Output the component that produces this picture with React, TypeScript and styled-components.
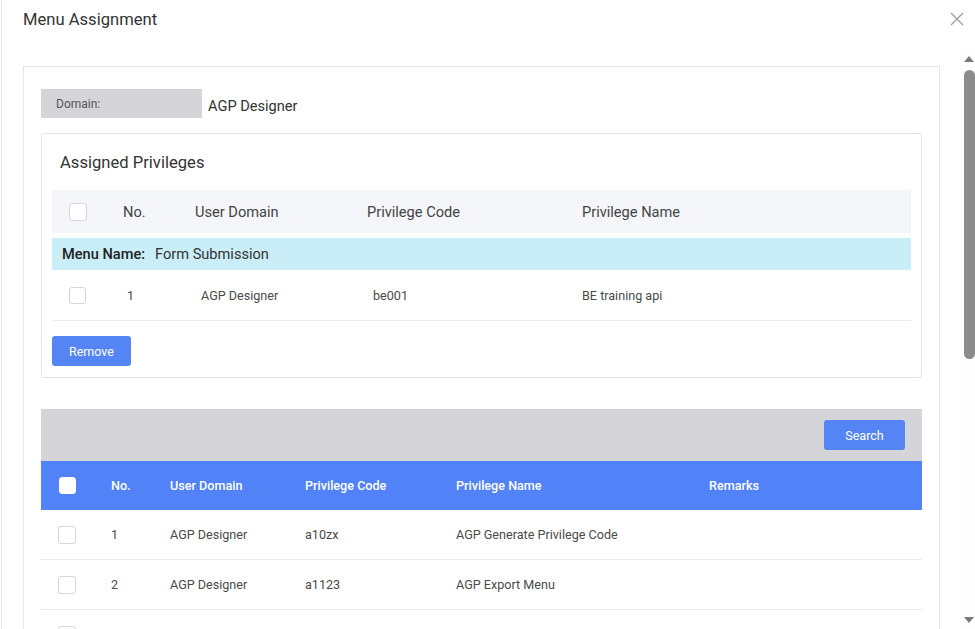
import React from "react";
import styled, { createGlobalStyle } from "styled-components";

const GlobalStyle = createGlobalStyle`
  html, body {
    margin: 0;
    padding: 0;
    background: #ffffff;
    font-family: Roboto, "Liberation Sans", Arial, sans-serif;
    color: #333;
  }
  * {
    box-sizing: border-box;
  }
`;

interface Privilege {
  no: number;
  domain: string;
  code: string;
  name: string;
  remarks?: string;
}

const available: Privilege[] = [
  { no: 1, domain: "AGP Designer", code: "a10zx", name: "AGP Generate Privilege Code" },
  { no: 2, domain: "AGP Designer", code: "a1123", name: "AGP Export Menu" },
  { no: 3, domain: "AGP Designer", code: "a1124", name: "AGP Assign Menu" },
  { no: 4, domain: "AGP Designer", code: "a1125", name: "AGP Import Menu" },
  { no: 5, domain: "AGP Designer", code: "a1126", name: "AGP Delete Menu" },
  { no: 6, domain: "AGP Designer", code: "a1127", name: "AGP Edit Menu" },
  { no: 7, domain: "AGP Designer", code: "a1128", name: "AGP View Menu" },
  { no: 8, domain: "AGP Designer", code: "a1129", name: "AGP Copy Menu" },
];

const ASSIGNED_HEAD = "71px 72px 172px 215px 1fr";
const ASSIGNED_ROW = "75px 74px 172px 209px 1fr";
const LIST_COLS = "70px 59px 135px 151px 253px 1fr";

export default function App() {
  return (
    <>
      <GlobalStyle />
      <Modal>
        <ModalHeader>
          <Title>Menu Assignment</Title>
          <CloseButton aria-label="close">
            <svg width="14" height="14" viewBox="0 0 14 14">
              <path d="M1 1 L13 13 M13 1 L1 13" stroke="#9a9a9a" strokeWidth="1.2" fill="none" />
            </svg>
          </CloseButton>
        </ModalHeader>
        <ModalBody>
          <ScrollContent>
            <OuterCard>
              <DomainRow>
                <DomainLabel>Domain:</DomainLabel>
                <DomainValue>AGP Designer</DomainValue>
              </DomainRow>

              <AssignedCard>
                <SectionTitle>Assigned Privileges</SectionTitle>
                <AssignedHead cols={ASSIGNED_HEAD}>
                  <CheckCell $offset={17}>
                    <Checkbox $size={18} />
                  </CheckCell>
                  <span>No.</span>
                  <span>User Domain</span>
                  <span>Privilege Code</span>
                  <span>Privilege Name</span>
                </AssignedHead>
                <MenuNameRow>
                  <MenuLabel>Menu Name:</MenuLabel>
                  <span>Form Submission</span>
                </MenuNameRow>
                <AssignedRow cols={ASSIGNED_ROW}>
                  <CheckCell $offset={17}>
                    <Checkbox $size={17} />
                  </CheckCell>
                  <span>1</span>
                  <span>AGP Designer</span>
                  <span>be001</span>
                  <span>BE training api</span>
                </AssignedRow>
                <PrimaryButton $width={79}>Remove</PrimaryButton>
              </AssignedCard>

              <Toolbar>
                <PrimaryButton $width={81}>Search</PrimaryButton>
              </Toolbar>
              <ListHead cols={LIST_COLS}>
                <CheckCell $offset={18}>
                  <Checkbox $size={17} $filled />
                </CheckCell>
                <span>No.</span>
                <span>User Domain</span>
                <span>Privilege Code</span>
                <span>Privilege Name</span>
                <span>Remarks</span>
              </ListHead>
              {available.map((p) => (
                <ListRow key={p.no} cols={LIST_COLS}>
                  <CheckCell $offset={17}>
                    <Checkbox $size={18} />
                  </CheckCell>
                  <span>{p.no}</span>
                  <span>{p.domain}</span>
                  <span>{p.code}</span>
                  <span>{p.name}</span>
                  <span>{p.remarks ?? ""}</span>
                </ListRow>
              ))}
            </OuterCard>
          </ScrollContent>
          <ScrollRail>
            <RailArrow $dir="up" />
            <RailTrack>
              <RailThumb style={{ height: `${Math.round((579 / 1112) * 555)}px` }} />
            </RailTrack>
            <RailArrow $dir="down" />
          </ScrollRail>
        </ModalBody>
      </Modal>
    </>
  );
}

const Modal = styled.div`
  height: 629px;
  margin-left: 1px;
  border-left: 1px solid #e6e6e6;
  display: flex;
  flex-direction: column;
  background: #fff;
`;

const ModalHeader = styled.div`
  height: 50px;
  flex-shrink: 0;
  display: flex;
  align-items: flex-start;
  justify-content: space-between;
  padding: 10px 11px 0 21px;
`;

const Title = styled.div`
  font-size: 16.6px;
  line-height: 20px;
  color: #333;
`;

const CloseButton = styled.button`
  border: none;
  background: none;
  padding: 0;
  margin-top: 2px;
  width: 14px;
  height: 14px;
  display: flex;
  cursor: pointer;
`;

const ModalBody = styled.div`
  flex: 1;
  min-height: 0;
  display: flex;
`;

const ScrollContent = styled.div`
  flex: 1;
  overflow: hidden;
  padding: 16px 20px 24px 21px;
`;

const ScrollRail = styled.div`
  width: 15px;
  flex-shrink: 0;
  display: flex;
  flex-direction: column;
  align-items: center;
  padding: 3px 0 3px 3px;
  background: #fdfdfd;
`;

const RailArrow = styled.div<{ $dir: "up" | "down" }>`
  width: 0;
  height: 0;
  margin: 3px 0;
  border-left: 5.5px solid transparent;
  border-right: 5.5px solid transparent;
  ${(p) =>
    p.$dir === "up"
      ? "border-bottom: 6px solid #7a7a7a;"
      : "border-top: 6px solid #7a7a7a;"}
`;

const RailTrack = styled.div`
  flex: 1;
  width: 100%;
  display: flex;
  justify-content: center;
  padding-top: 5px;
`;

const RailThumb = styled.div`
  width: 11px;
  border-radius: 5.5px;
  background: #8c8c8c;
`;

const OuterCard = styled.div`
  border: 1px solid #e6e6e6;
  padding: 22px 17px 20px 17px;
`;

const DomainRow = styled.div`
  display: flex;
  align-items: center;
  margin-bottom: 15px;
`;

const DomainLabel = styled.div`
  width: 161px;
  height: 29px;
  background: #d4d4d9;
  font-size: 12px;
  color: #555;
  padding-left: 15px;
  display: flex;
  align-items: center;
`;

const DomainValue = styled.div`
  font-size: 14.6px;
  color: #333;
  margin-left: 6px;
  padding-top: 5px;
`;

const AssignedCard = styled.div`
  border: 1px solid #e4e4e4;
  border-radius: 3px;
  padding: 0 10px 11px 10px;
  margin-bottom: 31px;
`;

const SectionTitle = styled.div`
  font-size: 16.6px;
  line-height: 20px;
  color: #333;
  padding: 19px 0 17px 8px;
`;

const Grid = styled.div<{ cols: string }>`
  display: grid;
  grid-template-columns: ${(p) => p.cols};
  align-items: center;
`;

const AssignedHead = styled(Grid)`
  height: 43px;
  background: #f4f6f9;
  font-size: 14.6px;
  color: #444;
  margin-bottom: 5px;
`;

const MenuNameRow = styled.div`
  height: 32px;
  background: #c9eef8;
  display: flex;
  align-items: center;
  gap: 10px;
  padding-left: 10px;
  font-size: 14.6px;
  color: #333;
`;

const MenuLabel = styled.span`
  font-weight: 500;
  color: #222;
`;

const AssignedRow = styled(Grid)`
  height: 51px;
  border-bottom: 1px solid #ececec;
  font-size: 12.6px;
  color: #4a4a4a;
  margin-bottom: 15px;
`;

const CheckCell = styled.div<{ $offset: number }>`
  padding-left: ${(p) => p.$offset}px;
  display: flex;
  align-items: center;
`;

const Checkbox = styled.span<{ $size: number; $filled?: boolean }>`
  display: inline-block;
  width: ${(p) => p.$size}px;
  height: ${(p) => p.$size}px;
  border-radius: 3px;
  border: 1px solid ${(p) => (p.$filled ? "#ffffff" : "#d6d6d6")};
  background: #fff;
`;

const PrimaryButton = styled.button<{ $width: number }>`
  width: ${(p) => p.$width}px;
  height: 30px;
  border: none;
  border-radius: 3px;
  background: #5585f5;
  color: #fff;
  font-family: inherit;
  font-size: 12.5px;
  cursor: pointer;
`;

const Toolbar = styled.div`
  height: 52px;
  background: #d4d4d9;
  display: flex;
  align-items: center;
  justify-content: flex-end;
  padding-right: 17px;
`;

const ListHead = styled(Grid)`
  height: 49px;
  background: #5282f7;
  color: #fff;
  font-size: 12.6px;
  font-weight: 500;
`;

const ListRow = styled(Grid)`
  height: 50px;
  border-bottom: 1px solid #ebebeb;
  font-size: 12.6px;
  color: #4a4a4a;
`;
